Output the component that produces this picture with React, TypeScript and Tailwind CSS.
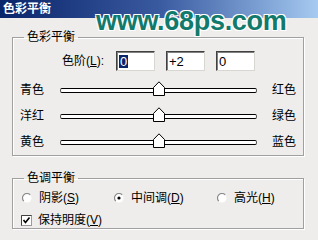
const font = { fontFamily: '"Liberation Sans", "Noto Sans CJK SC", sans-serif' }

function ValueBox({ value, selected }: { value: string; selected?: boolean }) {
  return (
    <div className="w-[39px] h-[20px] bg-white border border-t-[#404040] border-l-[#404040] border-r-[#d8d6d0] border-b-[#d8d6d0] shadow-[inset_1px_1px_0_#808080] flex items-center pl-[2px] text-[13px] text-black leading-none">
      {selected ? <span className="bg-[#0a246a] text-white px-[1px]">{value}</span> : <span>{value}</span>}
    </div>
  )
}

function Slider({ left, right }: { left: string; right: string }) {
  return (
    <div className="flex items-center h-[26px]">
      <div className="w-[47px] pl-[7px] text-[12px] text-black">{left}</div>
      <div className="relative w-[197px] h-[5px] bg-white border-y border-black border-x border-x-[#555] rounded-[2px]">
        <svg className="absolute left-[92px] -top-[8px]" width="12" height="15" viewBox="0 0 12 15">
          <path d="M0.5 14.5 V6.5 L6 0.8 L11.5 6.5 V14.5 Z" fill="#fff" stroke="#000" strokeWidth="1" />
        </svg>
      </div>
      <div className="ml-[15px] text-[12px] text-black">{right}</div>
    </div>
  )
}

function Radio({ label, u, checked }: { label: string; u: string; checked?: boolean }) {
  return (
    <div className="flex items-center gap-[7px]">
      <svg width="10" height="10" viewBox="0 0 10 10">
        <circle cx="5" cy="5" r="4.5" fill="#fff" />
        <path d="M8.2 1.8 A4.5 4.5 0 0 0 1.8 8.2" fill="none" stroke="#8a8a8a" strokeWidth="1.2" />
        {checked && <circle cx="5" cy="5" r="1.6" fill="#000" />}
      </svg>
      <span className="text-[12px] text-black">
        {label}(<span className="underline">{u}</span>)
      </span>
    </div>
  )
}

export default function App() {
  return (
    <div className="relative w-[318px] h-[240px] bg-[#eeedeb] overflow-hidden" style={font}>
      {/* title bar */}
      <div className="h-[18px] bg-gradient-to-r from-[#0a246a] via-[#3a5aa0] to-[#a6caf0] flex items-center pl-[3px]">
        <span className="text-white text-[12px] font-bold">色彩平衡</span>
      </div>

      {/* watermark */}
      <div className="absolute left-[96px] top-[1px] text-[27px] font-bold text-[#127a6c] tracking-[-0.3px] [text-shadow:1px_1px_0_#fff,-1px_-1px_0_#fff,1px_-1px_0_#fff,-1px_1px_0_#fff]">
        www.68ps.com
      </div>

      <div className="pl-[12px] pr-[14px] pt-[12px]">
        <fieldset className="border border-[#a0a0a0] shadow-[1px_1px_0_#fff,inset_1px_1px_0_#fff] h-[126px] px-0">
          <legend className="ml-[11px] px-[3px] text-[12px] text-black leading-[14px]">色彩平衡</legend>
          <div className="flex items-center pl-[49px] mt-[7px] gap-[10px]">
            <span className="w-[44px] text-[12px] text-black">
              色阶(<span className="underline">L</span>):
            </span>
            <div className="flex gap-[11px]">
              <ValueBox value="0" selected />
              <ValueBox value="+2" />
              <ValueBox value="0" />
            </div>
          </div>
          <div className="mt-[6px]">
            <Slider left="青色" right="红色" />
            <Slider left="洋红" right="绿色" />
            <Slider left="黄色" right="蓝色" />
          </div>
        </fieldset>

        <fieldset className="mt-[15px] border border-[#a0a0a0] shadow-[1px_1px_0_#fff,inset_1px_1px_0_#fff] h-[58px] px-0">
          <legend className="ml-[11px] px-[3px] text-[12px] text-black leading-[14px]">色调平衡</legend>
          <div className="flex items-center pl-[9px] mt-[4px]">
            <div className="w-[92px]">
              <Radio label="阴影" u="S" />
            </div>
            <div className="w-[103px]">
              <Radio label="中间调" u="D" checked />
            </div>
            <Radio label="高光" u="H" />
          </div>
          <div className="flex items-center gap-[6px] pl-[8px] mt-[4px]">
            <svg width="11" height="11" viewBox="0 0 11 11">
              <rect x="0.5" y="0.5" width="10" height="10" fill="#fff" stroke="#9a9a9a" />
              <path d="M0.5 10.5 V0.5 H10.5" fill="none" stroke="#404040" />
              <path d="M2.5 5 L4.5 7.5 L8.5 2.5" fill="none" stroke="#000" strokeWidth="1.6" />
            </svg>
            <span className="text-[12px] text-black">
              保持明度(<span className="underline">V</span>)
            </span>
          </div>
        </fieldset>
      </div>
    </div>
  )
}
